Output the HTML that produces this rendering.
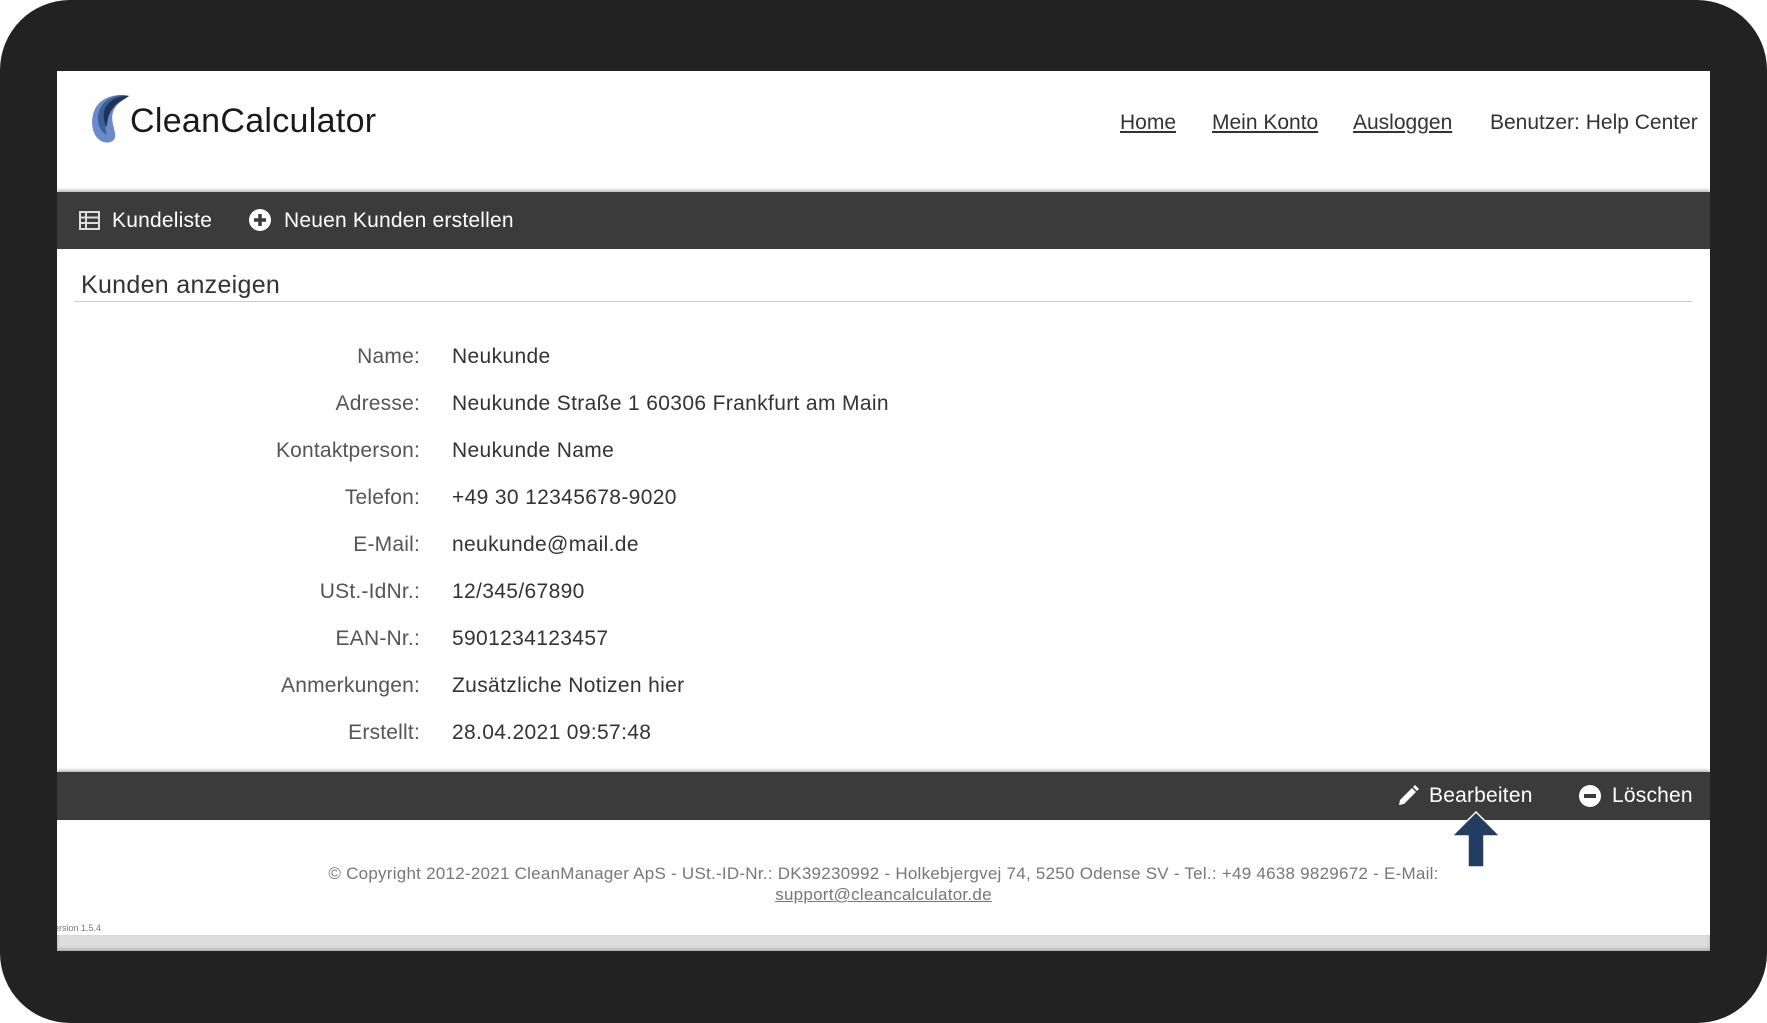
<!DOCTYPE html>
<html><head><meta charset="utf-8"><style>
*{margin:0;padding:0;box-sizing:border-box}
body{width:1767px;height:1023px;background:#fff;font-family:"Liberation Sans",sans-serif;position:relative;overflow:hidden}
.frame{position:absolute;left:0;top:0;width:1767px;height:1023px;background:#222;border-radius:70px}
.screen{position:absolute;left:57px;top:71px;width:1653px;height:880px;background:#fff;overflow:hidden}
.a{position:absolute;white-space:nowrap}
.nav{position:absolute;left:0;top:121px;width:1653px;height:57px;background:#3b3b3b;box-shadow:0 -2px 3px #bbb}
.bar{position:absolute;left:0;top:701px;width:1653px;height:48px;background:#3b3b3b;box-shadow:0 -2px 3px #bbb}
.lnk{font-size:21px;color:#333;text-decoration:underline;top:40px}
.lab{right:1290px;text-align:right;font-size:21px;color:#555;letter-spacing:0.2px}
.val{left:395px;font-size:21px;color:#333;letter-spacing:0.35px}
.w{color:#fff;font-size:21px;letter-spacing:0.2px}
</style></head><body>
<div class="frame"></div>
<div class="screen">
  <svg class="a" style="left:30px;top:22px" width="46" height="52" viewBox="0 0 46 52">
    <path d="M42 3C30 0 14 4 8 16C3 26 4 42 14 48C22 52 30 48 28 40C26 30 22 22 30 12C34 8 38 6 42 3Z" fill="#6a8bc8"/>
    <path d="M42 3C30 0 16 6 12 18C9 28 12 38 20 42C16 32 20 18 30 10C34 7 38 5 42 3Z" fill="#3d5f99"/>
    <path d="M42 3C32 2 20 8 17 18C16 24 17 30 20 34C20 24 24 14 34 8Z" fill="#1f3357"/>
  </svg>
  <div class="a" style="left:73px;top:31px;font-size:34px;color:#1a1a1a;letter-spacing:0.3px">CleanCalculator</div>
  <div class="a lnk" style="left:1063px">Home</div>
  <div class="a lnk" style="left:1155px">Mein Konto</div>
  <div class="a lnk" style="left:1296px">Ausloggen</div>
  <div class="a" style="left:1433px;top:40px;font-size:21px;color:#333">Benutzer: Help Center</div>
  <div class="nav">
    <svg class="a" style="left:22px;top:19px" width="21" height="19" viewBox="0 0 21 19"><rect x="1" y="1" width="19" height="17" fill="none" stroke="#ddd" stroke-width="2"/><path d="M1 6.5H20M1 12H20M7 1V18" stroke="#ddd" stroke-width="2"/></svg>
    <div class="a w" style="left:55px;top:17px">Kundeliste</div>
    <svg class="a" style="left:192px;top:17px" width="22" height="22" viewBox="0 0 22 22"><circle cx="11" cy="11" r="11" fill="#fff"/><path d="M11 5V17M5 11H17" stroke="#3b3b3b" stroke-width="3.5"/></svg>
    <div class="a w" style="left:227px;top:17px">Neuen Kunden erstellen</div>
  </div>
  <div class="a" style="left:24px;top:200px;font-size:25px;color:#333;letter-spacing:0.3px">Kunden anzeigen</div>
  <div class="a" style="left:17px;top:230px;width:1618px;height:1px;background:#ccc"></div>
  <div class="a lab" style="top:274px">Name:</div><div class="a val" style="top:274px">Neukunde</div>
  <div class="a lab" style="top:321px">Adresse:</div><div class="a val" style="top:321px">Neukunde Straße 1 60306 Frankfurt am Main</div>
  <div class="a lab" style="top:368px">Kontaktperson:</div><div class="a val" style="top:368px">Neukunde Name</div>
  <div class="a lab" style="top:415px">Telefon:</div><div class="a val" style="top:415px">+49 30 12345678-9020</div>
  <div class="a lab" style="top:462px">E-Mail:</div><div class="a val" style="top:462px">neukunde@mail.de</div>
  <div class="a lab" style="top:509px">USt.-IdNr.:</div><div class="a val" style="top:509px">12/345/67890</div>
  <div class="a lab" style="top:556px">EAN-Nr.:</div><div class="a val" style="top:556px">5901234123457</div>
  <div class="a lab" style="top:603px">Anmerkungen:</div><div class="a val" style="top:603px">Zusätzliche Notizen hier</div>
  <div class="a lab" style="top:650px">Erstellt:</div><div class="a val" style="top:650px">28.04.2021 09:57:48</div>
  <div class="bar">
    <svg class="a" style="left:1340px;top:13px" width="22" height="22" viewBox="0 0 22 22"><path d="M2 20L3 15L15 3L19 7L7 19Z" fill="#fff"/><path d="M16 2L18 0L22 4L20 6Z" fill="#fff"/></svg>
    <div class="a w" style="left:1372px;top:12px">Bearbeiten</div>
    <svg class="a" style="left:1522px;top:13px" width="22" height="22" viewBox="0 0 22 22"><circle cx="11" cy="11" r="11" fill="#fff"/><rect x="5" y="9" width="12" height="4" fill="#3b3b3b"/></svg>
    <div class="a w" style="left:1555px;top:12px">Löschen</div>
  </div>
  <svg class="a" style="left:1393px;top:740px" width="52" height="58" viewBox="0 0 52 58"><path d="M26 1L50 25H34V56H18V25H2Z" fill="#233c62" stroke="#fff" stroke-width="1.5"/></svg>
  <div class="a" style="left:0;width:1653px;top:792px;text-align:center;font-size:17px;letter-spacing:0.25px;color:#777;line-height:21px;white-space:normal">© Copyright 2012-2021 CleanManager ApS - USt.-ID-Nr.: DK39230992 - Holkebjergvej 74, 5250 Odense SV - Tel.: +49 4638 9829672 - E-Mail:<br><span style="text-decoration:underline">support@cleancalculator.de</span></div>
  <div class="a" style="left:-3px;top:852px;font-size:9px;color:#777">ersion 1.5.4</div>
  <div class="a" style="left:0;top:864px;width:1653px;height:16px;background:#ddd;box-shadow:0 -2px 3px #aaa inset"></div>
</div>
</body></html>
